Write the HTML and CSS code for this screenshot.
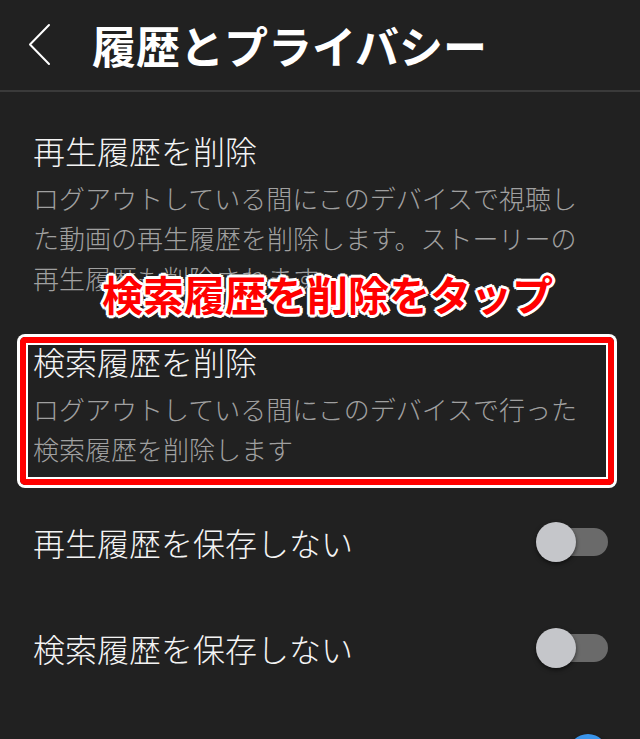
FILE: index.html
```html
<!DOCTYPE html>
<html lang="ja">
<head>
<meta charset="utf-8">
<title>履歴とプライバシー</title>
<link rel="stylesheet" href="styles.css">
</head>
<body>
<div class="screen">
  <header class="bar">
    <svg class="back" width="26" height="44" viewBox="0 0 26 44" aria-hidden="true">
      <polyline points="22,2 3,21.5 22,41" fill="none" stroke="#ffffff" stroke-width="2" stroke-linecap="round" stroke-linejoin="round"/>
    </svg>
    <h1 class="bar-title">履歴とプライバシー</h1>
  </header>

  <main class="list">
    <section class="item item-first">
      <div class="item-title">再生履歴を削除</div>
      <div class="item-desc">ログアウトしている間にこのデバイスで視聴した動画の再生履歴を削除します。ストーリーの再生履歴も削除されます。</div>
    </section>
    <section class="item item-second">
      <div class="item-title">検索履歴を削除</div>
      <div class="item-desc">ログアウトしている間にこのデバイスで行った検索履歴を削除します</div>
    </section>

    <div class="row">
      <span class="row-label">再生履歴を保存しない</span>
      <span class="toggle"><span class="track"></span><span class="knob"></span></span>
    </div>
    <div class="row">
      <span class="row-label">検索履歴を保存しない</span>
      <span class="toggle"><span class="track"></span><span class="knob"></span></span>
    </div>
    <div class="row">
      <span class="row-label"></span>
      <span class="toggle on"><span class="track"></span><span class="knob"></span></span>
    </div>
  </main>

  <div class="highlight"></div>
  <div class="caption">検索履歴を削除をタップ</div>
</div>
</body>
</html>
```

FILE: styles.css
```css
html, body {
  margin: 0;
  padding: 0;
  background: #212121;
}

body {
  font-family: "Noto Sans CJK JP", "Noto Sans", sans-serif;
  color: #f1f1f1;
  width: 640px;
  height: 739px;
  overflow: hidden;
}

.screen {
  position: relative;
  width: 640px;
  height: 739px;
  overflow: hidden;
}

.bar {
  display: flex;
  align-items: center;
  height: 90px;
  padding-left: 27px;
  border-bottom: 2px solid #3a3a3a;
}

.back {
  display: block;
  flex: none;
}

.bar-title {
  margin: 0 0 0 39px;
  font-size: 44px;
  font-weight: 700;
  line-height: 1;
  color: #ffffff;
}

.list {
  display: flex;
  flex-direction: column;
  padding: 0 32px 0 33px;
}

.item-first {
  padding-top: 38px;
}

.item-second {
  padding-top: 43px;
}

.item-title {
  font-size: 32px;
  font-weight: 300;
  line-height: 40px;
  color: #f4f4f4;
  margin-bottom: 8px;
}

.item-desc {
  font-size: 26px;
  font-weight: 300;
  line-height: 40px;
  color: #a0a0a0;
  max-width: 560px;
}

.row {
  display: flex;
  flex: none;
  align-items: center;
  justify-content: space-between;
  height: 106px;
}

.item-second + .row {
  margin-top: 20px;
}

.row-label {
  font-size: 32px;
  font-weight: 300;
  line-height: 40px;
  color: #f4f4f4;
}

.toggle {
  position: relative;
  width: 72px;
  height: 40px;
  flex: none;
}

.track {
  position: absolute;
  left: 9px;
  top: 6px;
  width: 63px;
  height: 28px;
  border-radius: 14px;
  background: #6a6a6a;
}

.knob {
  position: absolute;
  left: 0;
  top: 0;
  width: 40px;
  height: 40px;
  border-radius: 50%;
  background: #c5c6ca;
  box-shadow: 0 2px 4px rgba(0, 0, 0, 0.55);
}

.toggle.on .track {
  background: #1f5f99;
}

.toggle.on .knob {
  left: 32px;
  background: #3a94ea;
}

.highlight {
  position: absolute;
  left: 20px;
  top: 337px;
  width: 582px;
  height: 136px;
  border: 6px solid #ff0000;
  border-radius: 5px;
  box-shadow: 0 0 0 3px #ffffff, inset 0 0 0 2px #ffffff;
}

.caption {
  position: absolute;
  left: 102px;
  top: 268px;
  font-size: 41px;
  line-height: 50px;
  font-weight: 700;
  color: #ff0000;
  white-space: nowrap;
  text-shadow:
    2px 0 0 #fff, -2px 0 0 #fff, 0 2px 0 #fff, 0 -2px 0 #fff,
    2px 2px 0 #fff, -2px 2px 0 #fff, 2px -2px 0 #fff, -2px -2px 0 #fff,
    3px 0 0 #fff, -3px 0 0 #fff, 0 3px 0 #fff, 0 -3px 0 #fff;
}
```
